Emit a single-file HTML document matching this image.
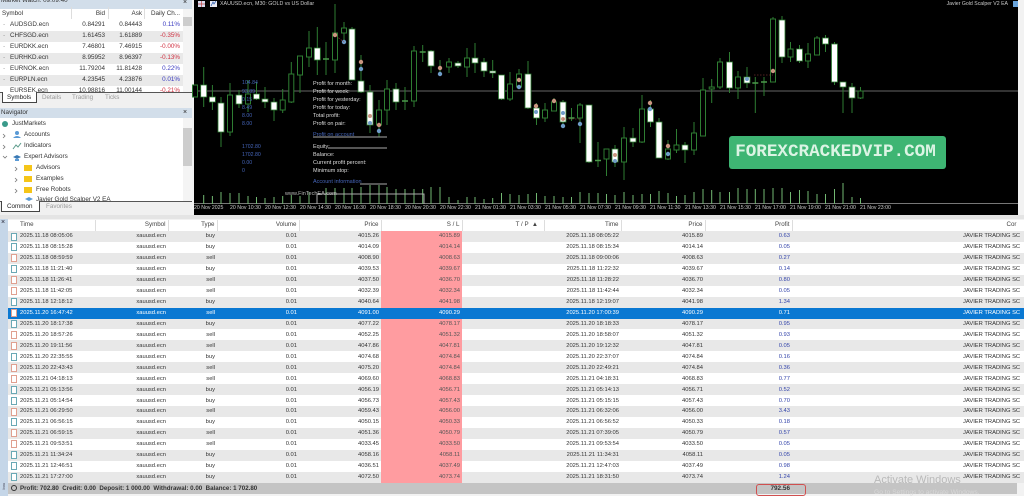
<!DOCTYPE html>
<html><head><meta charset="utf-8"><title>MT5</title>
<style>
*{box-sizing:border-box}
html,body{margin:0;padding:0;background:#f2f2f2}
body{width:1024px;height:496px;overflow:hidden;position:relative;font-family:"Liberation Sans",sans-serif}
#w{position:absolute;left:0;top:0;width:1024px;height:496px;overflow:hidden;filter:blur(.35px);background:#f2f2f2}
.a{position:absolute;white-space:nowrap}
.s{font-size:6.3px;color:#333;line-height:10px;height:10px}
.r{text-align:right}
.g{background:#e9e9e9}
.t{font-size:5.5px;color:#ddd;line-height:8px;left:313px}
.b{font-size:5.2px;color:#4565b8;line-height:8px;left:242px}
.x{font-size:5.2px;color:#ccc;line-height:8px;top:204px}
table{position:absolute;left:8px;top:219.5px;width:1016px;table-layout:fixed;border-collapse:collapse;font-size:5.8px;color:#333}
td,th{height:10.95px;padding:0 2px;line-height:10px;white-space:nowrap;overflow:hidden;text-align:right;font-weight:normal}
th{height:11.5px;background:#fff;border-right:1px solid #ddd;font-size:6.2px;color:#444}
tr:nth-child(even) td{background:#e8e8e8}
tr td:nth-child(6){background:#ff9ca0!important;color:#555}
tr td:nth-child(10){color:#3344aa}
tr td:nth-child(1),th:nth-child(1){text-align:left;padding-left:12px;position:relative}
tr td:nth-child(11){text-align:left;padding-left:171px}
th:nth-child(11){text-align:left;padding-left:214px}
tr.sel td,tr.sel td:nth-child(6),tr.sel td:nth-child(10){background:#0a78d2!important;color:#fff}
i{position:absolute;left:3px;top:1.5px;width:6px;height:8px;border:1px solid #6aa9b5;background:#fff}
i.e{border-color:#e0a090}
</style></head><body><div id="w">

<!-- sidebar -->
<div class="a" style="left:0;top:0;width:192px;height:215px;background:#f0f0f0"></div>
<div class="a" style="left:0;top:0;width:192px;height:9px;background:#d2deea"></div>
<div class="a" style="left:1px;top:-3px;font-size:6.3px;line-height:8px;color:#333">Market Watch: 09:09:40</div>
<div class="a" style="left:183px;top:-1px;font-size:7px;line-height:8px;color:#222">×</div>
<div class="a" style="left:0;top:9px;width:183px;height:83px;background:#fff"></div>
<div class="a g" style="left:0;top:30.5px;width:183px;height:11px"></div>
<div class="a g" style="left:0;top:52.5px;width:183px;height:11px"></div>
<div class="a g" style="left:0;top:74.5px;width:183px;height:11px"></div>
<div class="a" style="left:71px;top:7px;width:1px;height:12px;background:#ddd"></div>
<div class="a" style="left:108px;top:7px;width:1px;height:12px;background:#ddd"></div>
<div class="a" style="left:144px;top:7px;width:1px;height:12px;background:#ddd"></div>
<div class="a s" style="left:2px;top:9px">Symbol</div>
<div class="a s r" style="left:60px;top:9px;width:45px">Bid</div>
<div class="a s r" style="left:97px;top:9px;width:45px">Ask</div>
<div class="a s r" style="left:135px;top:9px;width:45px">Daily Ch...</div>

<div class="a s" style="left:3px;top:20px">·</div><div class="a s" style="left:10px;top:20px">AUDSGD.ecn</div><div class="a s r" style="left:60px;top:20px;width:45px">0.84291</div><div class="a s r" style="left:97px;top:20px;width:45px">0.84443</div><div class="a s r" style="left:135px;top:20px;width:45px;color:#3a3ac0">0.11%</div>
<div class="a s" style="left:3px;top:31px">·</div><div class="a s" style="left:10px;top:31px">CHFSGD.ecn</div><div class="a s r" style="left:60px;top:31px;width:45px">1.61453</div><div class="a s r" style="left:97px;top:31px;width:45px">1.61889</div><div class="a s r" style="left:135px;top:31px;width:45px;color:#d03040">-0.35%</div>
<div class="a s" style="left:3px;top:42px">·</div><div class="a s" style="left:10px;top:42px">EURDKK.ecn</div><div class="a s r" style="left:60px;top:42px;width:45px">7.46801</div><div class="a s r" style="left:97px;top:42px;width:45px">7.46915</div><div class="a s r" style="left:135px;top:42px;width:45px;color:#d03040">-0.00%</div>
<div class="a s" style="left:3px;top:53px">·</div><div class="a s" style="left:10px;top:53px">EURHKD.ecn</div><div class="a s r" style="left:60px;top:53px;width:45px">8.95952</div><div class="a s r" style="left:97px;top:53px;width:45px">8.96397</div><div class="a s r" style="left:135px;top:53px;width:45px;color:#d03040">-0.13%</div>
<div class="a s" style="left:3px;top:64px">·</div><div class="a s" style="left:10px;top:64px">EURNOK.ecn</div><div class="a s r" style="left:60px;top:64px;width:45px">11.79204</div><div class="a s r" style="left:97px;top:64px;width:45px">11.81428</div><div class="a s r" style="left:135px;top:64px;width:45px;color:#3a3ac0">0.22%</div>
<div class="a s" style="left:3px;top:75px">·</div><div class="a s" style="left:10px;top:75px">EURPLN.ecn</div><div class="a s r" style="left:60px;top:75px;width:45px">4.23545</div><div class="a s r" style="left:97px;top:75px;width:45px">4.23876</div><div class="a s r" style="left:135px;top:75px;width:45px;color:#3a3ac0">0.01%</div>
<div class="a s" style="left:10px;top:86px">EURSEK.ecn</div><div class="a s r" style="left:60px;top:86px;width:45px">10.98816</div><div class="a s r" style="left:97px;top:86px;width:45px">11.00144</div><div class="a s r" style="left:135px;top:86px;width:45px;color:#d03040">-0.21%</div>

<div class="a" style="left:183px;top:9px;width:9px;height:83px;background:#f4f4f4"></div>
<div class="a" style="left:183px;top:17px;width:9px;height:9px;background:#cdcdcd"></div>
<div class="a" style="left:0;top:92px;width:192px;height:16px;background:#f0f0f0;border-top:1px solid #555"></div>
<div class="a" style="left:2px;top:92px;width:35px;height:11px;background:#fff;border:1px solid #444;border-top:0"></div>
<div class="a s" style="left:7px;top:93px;color:#222">Symbols</div>
<div class="a s" style="left:42px;top:93px;color:#999">Details</div>
<div class="a s" style="left:72px;top:93px;color:#999">Trading</div>
<div class="a s" style="left:105px;top:93px;color:#999">Ticks</div>

<div class="a" style="left:0;top:108px;width:192px;height:10px;background:#d2deea"></div>
<div class="a s" style="left:1px;top:108px">Navigator</div>
<div class="a" style="left:183px;top:108px;font-size:7px;line-height:10px;color:#222">×</div>
<div class="a" style="left:0;top:118px;width:192px;height:83px;background:#fff"></div>
<div class="a" style="left:183px;top:118px;width:9px;height:83px;background:#f4f4f4"></div>
<div class="a" style="left:183px;top:128px;width:9px;height:38px;background:#cdcdcd"></div>
<svg class="a" style="left:0;top:118px" width="40" height="85" viewBox="0 0 40 85">
<circle cx="5" cy="6" r="3" fill="#3a9a8a"/>
<path d="M3 16l2 2-2 2M3 27l2 2-2 2M3 38l2 2 2-2M15 49l2 2-2 2M15 60l2 2-2 2M15 71l2 2-2 2" fill="none" stroke="#777" stroke-width=".8"/>
<circle cx="17" cy="15" r="2" fill="#5a9ad5"/><path d="M13 20q4-4 8 0z" fill="#5a9ad5"/>
<path d="M13 31l3-4 2 2 3-4" fill="none" stroke="#5a9a8a"/>
<path d="M13 39l4-2 4 2-4 2z" fill="#3a7ab5"/><path d="M15 41v2h4v-2" fill="#5a9ad5"/>
<rect x="24" y="47" width="8" height="6" fill="#f5c518"/><rect x="24" y="58" width="8" height="6" fill="#f5c518"/><rect x="24" y="69" width="8" height="6" fill="#f5c518"/>
<path d="M25 81l4-2 4 2-4 2z" fill="#5a9ad5"/>
</svg>
<div class="a s" style="left:12px;top:119px">JustMarkets</div>
<div class="a s" style="left:24px;top:130px">Accounts</div>
<div class="a s" style="left:24px;top:141px">Indicators</div>
<div class="a s" style="left:24px;top:152px">Expert Advisors</div>
<div class="a s" style="left:36px;top:163px">Advisors</div>
<div class="a s" style="left:36px;top:174px">Examples</div>
<div class="a s" style="left:36px;top:185px">Free Robots</div>
<div class="a s" style="left:36px;top:195px">Javier Gold Scalper V2 EA</div>
<div class="a" style="left:0;top:201px;width:192px;height:14px;background:#f0f0f0;border-top:1px solid #555"></div>
<div class="a" style="left:1px;top:201px;width:39px;height:11px;background:#fff;border:1px solid #444;border-top:0"></div>
<div class="a s" style="left:7px;top:202px;color:#222">Common</div>
<div class="a s" style="left:46px;top:202px;color:#999">Favorites</div>

<!-- chart -->
<div class="a" style="left:194px;top:0;width:824px;height:215px;background:#000"></div>
<svg class="a" style="left:0;top:0" width="1024" height="216" viewBox="0 0 1024 216">
<path d="M194 91H1018" stroke="#666" stroke-width="1"/>
<path d="M194 203.5H1018" stroke="#777" stroke-width="1"/>
<path stroke="#2e7d32" stroke-width="1" fill="none" d="M203.7 67V107M212.4 85V110M221 97V147M230 83V136M239 90V108M248 80V112M256.5 82V100M265 87V108M274 98V121M282.7 89V113M291.3 62V103M300 56V93M309 31V67M317.3 27V75M326 42V75M335 4V73M344 22V43M352 27V80M361 55V93M370 85V133M379 100V137M387 80V125M396 83V110M405 87V110M414 46V107M422.7 45V62M431 50V73M440 60V75M449 58V73M458 61V68M467 48V77M475 43V73M484 58V77M492.7 60V78M501.5 75V100M510 72V101M519 69V88M528 61V109M536.5 103V125M545 103V122M554 98V111M563 100V125M571.5 108V121M580 103V143M589 105V163M598 142V167M606.5 149V176M615 145V167M624 127V180M633 128V147M642 95V143M650.5 100V127M659 118V158M668 140V160M676.5 129V153M685 142V163M694 122V155M703 78V136M711.7 79V103M720 58V89M729.5 52V93M738 71V99M747 67V88M755.3 77V113M764 77V96M773 17V82M782 16V63M790.5 42V62M799.5 45V63M808 43V68M817 36V55M825.5 35V52M834.5 42V85M843 82V113M852 83V113M860.5 87V99"/>
<path stroke="#2e7d32" stroke-width="1" fill="#000" d="M192.5 85h5v12h-5zM227.5 95h5v37h-5zM245.5 94h5v10h-5zM280.2 100h5v10h-5zM288.8 74h5v28h-5zM297.5 56h5v19h-5zM306.5 48h5v9h-5zM332.5 33h5v27h-5zM341.5 28h5v5h-5zM376.5 110h5v15h-5zM384.5 89h5v21h-5zM411.5 51h5v50h-5zM446.5 62h5v5h-5zM464.5 58h5v9h-5zM507.5 84h5v15h-5zM516.5 74h5v13h-5zM542.5 110h5v8h-5zM551.5 102h5v9h-5zM577.5 105h5v13h-5zM604 149h5v10h-5zM621.5 138h5v24h-5zM639.5 109h5v33h-5zM665.5 149h5v10h-5zM674 145h5v5h-5zM691.5 133h5v17h-5zM700.5 90h5v46h-5zM709.2 87h5v2h-5zM717.5 62h5v25h-5zM735.5 77h5v11h-5zM770.5 19h5v63h-5zM788 49h5v8h-5zM805.5 54h5v7h-5zM814.5 38h5v17h-5zM858 91h5v7h-5z"/>
<path stroke="#2e7d32" stroke-width=".8" fill="#fff" d="M200.7 85h6v12h-6zM209.4 97h6v5h-6zM218 103h6v29h-6zM236 95h6v9h-6zM253.5 94h6v5h-6zM262 99h6v3h-6zM271 102h6v8h-6zM314.3 48h6v12h-6zM349 29h6v51h-6zM358 81h6v11h-6zM367 92h6v33h-6zM393 89h6v13h-6zM428 51h6v15h-6zM455 63h6v3h-6zM472 58h6v5h-6zM481 62h6v9h-6zM489.7 71h6v2h-6zM498.5 75h6v24h-6zM525 74h6v34h-6zM533.5 108h6v10h-6zM560 102h6v20h-6zM586 105h6v57h-6zM612 149h6v13h-6zM630 138h6v4h-6zM647.5 109h6v13h-6zM656 122h6v36h-6zM682 145h6v5h-6zM726.5 62h6v26h-6zM744 77h6v6h-6zM779 20h6v37h-6zM796.5 49h6v12h-6zM822.5 38h6v6h-6zM831.5 44h6v38h-6zM840 82h6v5h-6zM849 87h6v11h-6z"/>
<path stroke="#4a9a4a" stroke-width="1.4" d="M323 59h6M402 101h6M419.7 52h6M568.5 118h6M595 160.5h6M761 82h6M752.3 83h6"/>
<path stroke="#72b872" stroke-width="1" d="M203.7 195V204M212.4 196V204M221 192V204M230 193V204M239 193V204M248 196V204M256.5 197V204M265 198V204M274 197V204M282.7 196V204M291.3 195V204M300 196V204M309 192V204M326 188V204M335 188V204M344 188V204M352 188V204M361 187V204M370 185V204M379 185V204M387 187V204M396 189V204M405 189V204M414 189V204M422.7 189V204M431 187V204M440 187V204M449 197V204M458 200V204M467 197V204M475 197V204M484 199V204M492.7 198V204M501.5 193V204M510 194V204M519 195V204M528 194V204M536.5 193V204M545 196V204M554 196V204M563 197V204M571.5 197V204M580 192V204M589 193V204M598 193V204M606.5 194V204M615 195V204M624 192V204M633 195V204M642 194V204M650.5 194V204M659 191V204M668 193V204M676.5 196V204M685 195V204M694 192V204M703 189V204M711.7 190V204M720 192V204M729.5 192V204M738 188V204M747 189V204M755.3 189V204M764 189V204M773 188V204M782 188V204M790.5 192V204M799.5 190V204M808 191V204M817 194V204M825.5 194V204M834.5 189V204M843 183V204M852 197V204M860.5 198V204"/>
<g fill="#c99580"><circle cx="335" cy="35" r="2.2"/><circle cx="361" cy="62" r="2.2"/><circle cx="440" cy="68" r="2.2"/><circle cx="370" cy="116" r="2"/><circle cx="379" cy="125" r="2.2"/><circle cx="519" cy="80" r="2.2"/><circle cx="536" cy="106" r="2.2"/><circle cx="554" cy="101" r="2.2"/><circle cx="650" cy="103" r="2.2"/><circle cx="563" cy="119" r="2"/><circle cx="615" cy="155" r="2"/><circle cx="668" cy="146" r="2.2"/><circle cx="773" cy="71" r="2.2"/></g>
<g fill="#6f9cc8"><circle cx="344" cy="42" r="2.2"/><circle cx="361" cy="69" r="2.2"/><circle cx="440" cy="74" r="2.2"/><circle cx="370" cy="123" r="2"/><circle cx="379" cy="131" r="2.2"/><circle cx="519" cy="87" r="2.2"/><circle cx="650" cy="109" r="2.2"/><circle cx="536" cy="112" r="2"/><circle cx="563" cy="113" r="2"/><circle cx="563" cy="126" r="2.2"/><circle cx="580" cy="124" r="2.2"/><circle cx="615" cy="161" r="2"/><circle cx="668" cy="154" r="2.2"/><circle cx="747" cy="79" r="2"/></g>
<path d="M336 36l8 6M563 119h17M754 75h19" stroke="#a04040" stroke-width=".6" stroke-dasharray="1.5 1.5" fill="none"/>
<path d="M313 137H387M328 148H387M360 184H387M317 194H424V204M317 194V204" stroke="#aaa" stroke-width="1" fill="none"/>
<rect x="198" y="1" width="7" height="6" fill="#d8dcf0"/><path d="M198 4h7M201.5 1v6" stroke="#c04040" stroke-width=".7"/>
<rect x="210" y="1" width="7" height="6" fill="#e8eaf4"/><path d="M211 6l2-4 1 2 2-3" stroke="#3060b0" fill="none" stroke-width=".8"/>
<rect x="1013" y="1" width="5" height="6" fill="#6aa5dc"/>
</svg>

<div class="a" style="left:220px;top:0;font-size:5.3px;line-height:8px;color:#ccc">XAUUSD.ecn, M30: GOLD vs US Dollar</div>
<div class="a r" style="left:900px;top:0;width:108px;font-size:5.2px;line-height:8px;color:#ccc">Javier Gold Scalper V2 EA</div>

<div class="a b" style="top:79px">104.84</div><div class="a b" style="top:88px">93.89</div><div class="a b" style="top:96px">0.15</div><div class="a b" style="top:104px">8.49</div><div class="a b" style="top:112px">8.00</div><div class="a b" style="top:120px">8.00</div>
<div class="a b" style="top:143px">1702.80</div><div class="a b" style="top:151px">1702.80</div><div class="a b" style="top:159px">0.00</div><div class="a b" style="top:167px">0</div>
<div class="a t" style="top:80px">Profit for month:</div><div class="a t" style="top:88px">Profit for week:</div><div class="a t" style="top:96px">Profit for yesterday:</div><div class="a t" style="top:104px">Profit for today:</div><div class="a t" style="top:112px">Total profit:</div><div class="a t" style="top:120px">Profit on pair:</div>
<div class="a t" style="top:131px;color:#4565b8">Profit on account</div>
<div class="a t" style="top:143px">Equity:</div><div class="a t" style="top:151px">Balance:</div><div class="a t" style="top:159px">Current profit percent:</div><div class="a t" style="top:167px">Minimum stop:</div>
<div class="a t" style="top:178px;color:#4565b8">Account information</div>
<div class="a t" style="left:285px;top:190px;color:#bbb;font-size:5.5px">www.FinTechEA.com</div>

<div class="a x" style="left:194px">20 Nov 2025</div><div class="a x" style="left:230px">20 Nov 10:30</div><div class="a x" style="left:265px">20 Nov 12:30</div><div class="a x" style="left:300px">20 Nov 14:30</div><div class="a x" style="left:335px">20 Nov 16:30</div><div class="a x" style="left:370px">20 Nov 18:30</div><div class="a x" style="left:405px">20 Nov 20:30</div><div class="a x" style="left:440px">20 Nov 22:30</div><div class="a x" style="left:475px">21 Nov 01:30</div><div class="a x" style="left:510px">21 Nov 03:30</div><div class="a x" style="left:545px">21 Nov 05:30</div><div class="a x" style="left:580px">21 Nov 07:30</div><div class="a x" style="left:615px">21 Nov 09:30</div><div class="a x" style="left:650px">21 Nov 11:30</div><div class="a x" style="left:685px">21 Nov 13:30</div><div class="a x" style="left:720px">21 Nov 15:30</div><div class="a x" style="left:755px">21 Nov 17:00</div><div class="a x" style="left:790px">21 Nov 19:00</div><div class="a x" style="left:825px">21 Nov 21:00</div><div class="a x" style="left:860px">21 Nov 23:00</div>

<div class="a" style="left:729px;top:136px;width:217px;height:33px;border-radius:3px;background:#3eb573"></div>
<div class="a" style="left:727px;top:136px;width:217px;height:33px;line-height:33px;text-align:center;font-family:'Liberation Mono',monospace;font-weight:bold;font-size:17.6px;color:#dcf4e4">FOREXCRACKEDVIP.COM</div>

<!-- toolbox -->
<div class="a" style="left:0;top:215px;width:1024px;height:4px;background:#e4e4e4"></div>
<div class="a" style="left:0;top:219px;width:8px;height:277px;background:#c5d6e8"></div>
<div class="a" style="left:1px;top:218px;font-size:7px;line-height:9px;color:#223">×</div>
<div class="a" style="left:8px;top:230px;width:1016px;height:253px;background:#fff"></div>

<table>
<colgroup><col style="width:87px"><col style="width:73px"><col style="width:49px"><col style="width:82px"><col style="width:82px"><col style="width:81px"><col style="width:82px"><col style="width:77px"><col style="width:84px"><col style="width:87px"><col style="width:232px"></colgroup>
<tr><th>Time</th><th>Symbol</th><th>Type</th><th>Volume</th><th>Price</th><th>S / L</th><th>T / P &nbsp;▲&nbsp;&nbsp;</th><th>Time</th><th>Price</th><th>Profit</th><th>Cor</th></tr>
<tr><td><i></i>2025.11.18 08:05:06</td><td>xauusd.ecn</td><td>buy</td><td>0.01</td><td>4015.26</td><td>4015.89</td><td></td><td>2025.11.18 08:05:22</td><td>4015.89</td><td>0.63</td><td>JAVIER TRADING SC</td></tr>
<tr><td><i></i>2025.11.18 08:15:28</td><td>xauusd.ecn</td><td>buy</td><td>0.01</td><td>4014.09</td><td>4014.14</td><td></td><td>2025.11.18 08:15:34</td><td>4014.14</td><td>0.05</td><td>JAVIER TRADING SC</td></tr>
<tr><td><i class="e"></i>2025.11.18 08:59:59</td><td>xauusd.ecn</td><td>sell</td><td>0.01</td><td>4008.90</td><td>4008.63</td><td></td><td>2025.11.18 09:00:06</td><td>4008.63</td><td>0.27</td><td>JAVIER TRADING SC</td></tr>
<tr><td><i></i>2025.11.18 11:21:40</td><td>xauusd.ecn</td><td>buy</td><td>0.01</td><td>4039.53</td><td>4039.67</td><td></td><td>2025.11.18 11:22:32</td><td>4039.67</td><td>0.14</td><td>JAVIER TRADING SC</td></tr>
<tr><td><i class="e"></i>2025.11.18 11:26:41</td><td>xauusd.ecn</td><td>sell</td><td>0.01</td><td>4037.50</td><td>4036.70</td><td></td><td>2025.11.18 11:28:22</td><td>4036.70</td><td>0.80</td><td>JAVIER TRADING SC</td></tr>
<tr><td><i class="e"></i>2025.11.18 11:42:05</td><td>xauusd.ecn</td><td>sell</td><td>0.01</td><td>4032.39</td><td>4032.34</td><td></td><td>2025.11.18 11:42:44</td><td>4032.34</td><td>0.05</td><td>JAVIER TRADING SC</td></tr>
<tr><td><i></i>2025.11.18 12:18:12</td><td>xauusd.ecn</td><td>buy</td><td>0.01</td><td>4040.64</td><td>4041.98</td><td></td><td>2025.11.18 12:19:07</td><td>4041.98</td><td>1.34</td><td>JAVIER TRADING SC</td></tr>
<tr class="sel"><td><i class="e"></i>2025.11.20 16:47:42</td><td>xauusd.ecn</td><td>sell</td><td>0.01</td><td>4091.00</td><td>4090.29</td><td></td><td>2025.11.20 17:00:39</td><td>4090.29</td><td>0.71</td><td>JAVIER TRADING SC</td></tr>
<tr><td><i></i>2025.11.20 18:17:38</td><td>xauusd.ecn</td><td>buy</td><td>0.01</td><td>4077.22</td><td>4078.17</td><td></td><td>2025.11.20 18:18:33</td><td>4078.17</td><td>0.95</td><td>JAVIER TRADING SC</td></tr>
<tr><td><i class="e"></i>2025.11.20 18:57:26</td><td>xauusd.ecn</td><td>sell</td><td>0.01</td><td>4052.25</td><td>4051.32</td><td></td><td>2025.11.20 18:58:07</td><td>4051.32</td><td>0.93</td><td>JAVIER TRADING SC</td></tr>
<tr><td><i class="e"></i>2025.11.20 19:11:56</td><td>xauusd.ecn</td><td>sell</td><td>0.01</td><td>4047.86</td><td>4047.81</td><td></td><td>2025.11.20 19:12:32</td><td>4047.81</td><td>0.05</td><td>JAVIER TRADING SC</td></tr>
<tr><td><i></i>2025.11.20 22:35:55</td><td>xauusd.ecn</td><td>buy</td><td>0.01</td><td>4074.68</td><td>4074.84</td><td></td><td>2025.11.20 22:37:07</td><td>4074.84</td><td>0.16</td><td>JAVIER TRADING SC</td></tr>
<tr><td><i class="e"></i>2025.11.20 22:43:43</td><td>xauusd.ecn</td><td>sell</td><td>0.01</td><td>4075.20</td><td>4074.84</td><td></td><td>2025.11.20 22:49:21</td><td>4074.84</td><td>0.36</td><td>JAVIER TRADING SC</td></tr>
<tr><td><i class="e"></i>2025.11.21 04:18:13</td><td>xauusd.ecn</td><td>sell</td><td>0.01</td><td>4069.60</td><td>4068.83</td><td></td><td>2025.11.21 04:18:31</td><td>4068.83</td><td>0.77</td><td>JAVIER TRADING SC</td></tr>
<tr><td><i></i>2025.11.21 05:13:56</td><td>xauusd.ecn</td><td>buy</td><td>0.01</td><td>4056.19</td><td>4056.71</td><td></td><td>2025.11.21 05:14:13</td><td>4056.71</td><td>0.52</td><td>JAVIER TRADING SC</td></tr>
<tr><td><i></i>2025.11.21 05:14:54</td><td>xauusd.ecn</td><td>buy</td><td>0.01</td><td>4056.73</td><td>4057.43</td><td></td><td>2025.11.21 05:15:15</td><td>4057.43</td><td>0.70</td><td>JAVIER TRADING SC</td></tr>
<tr><td><i class="e"></i>2025.11.21 06:29:50</td><td>xauusd.ecn</td><td>sell</td><td>0.01</td><td>4059.43</td><td>4056.00</td><td></td><td>2025.11.21 06:32:06</td><td>4056.00</td><td>3.43</td><td>JAVIER TRADING SC</td></tr>
<tr><td><i></i>2025.11.21 06:56:15</td><td>xauusd.ecn</td><td>buy</td><td>0.01</td><td>4050.15</td><td>4050.33</td><td></td><td>2025.11.21 06:56:52</td><td>4050.33</td><td>0.18</td><td>JAVIER TRADING SC</td></tr>
<tr><td><i class="e"></i>2025.11.21 06:59:15</td><td>xauusd.ecn</td><td>sell</td><td>0.01</td><td>4051.36</td><td>4050.79</td><td></td><td>2025.11.21 07:39:05</td><td>4050.79</td><td>0.57</td><td>JAVIER TRADING SC</td></tr>
<tr><td><i class="e"></i>2025.11.21 09:53:51</td><td>xauusd.ecn</td><td>sell</td><td>0.01</td><td>4033.45</td><td>4033.50</td><td></td><td>2025.11.21 09:53:54</td><td>4033.50</td><td>0.05</td><td>JAVIER TRADING SC</td></tr>
<tr><td><i></i>2025.11.21 11:34:24</td><td>xauusd.ecn</td><td>buy</td><td>0.01</td><td>4058.16</td><td>4058.11</td><td></td><td>2025.11.21 11:34:31</td><td>4058.11</td><td>0.05</td><td>JAVIER TRADING SC</td></tr>
<tr><td><i></i>2025.11.21 12:46:51</td><td>xauusd.ecn</td><td>buy</td><td>0.01</td><td>4036.51</td><td>4037.49</td><td></td><td>2025.11.21 12:47:03</td><td>4037.49</td><td>0.98</td><td>JAVIER TRADING SC</td></tr>
<tr><td><i></i>2025.11.21 17:27:00</td><td>xauusd.ecn</td><td>buy</td><td>0.01</td><td>4072.50</td><td>4073.74</td><td></td><td>2025.11.21 18:31:50</td><td>4073.74</td><td>1.24</td><td>JAVIER TRADING SC</td></tr>
</table>

<!-- footer -->
<div class="a" style="left:8px;top:483px;width:1009px;height:11px;background:#c4c4c4"></div>
<div class="a" style="left:11px;top:484px;width:6px;height:6px;border:1px solid #333;border-radius:50%;margin-top:1px"></div>
<div class="a" style="left:20px;top:484px;font-size:6.2px;line-height:10px;font-weight:bold;color:#333">Profit: 702.80 &nbsp;Credit: 0.00 &nbsp;Deposit: 1 000.00 &nbsp;Withdrawal: 0.00 &nbsp;Balance: 1 702.80</div>
<div class="a" style="left:756px;top:484px;width:50px;height:12px;border:1px solid #d05050;border-radius:3px"></div>
<div class="a r" style="left:750px;top:484px;width:40px;font-size:6.4px;line-height:10px;font-weight:bold;color:#333">792.56</div>
<div class="a" style="left:874px;top:474px;font-size:11px;line-height:13px;color:rgba(170,170,170,.75)">Activate Windows</div>
<div class="a" style="left:874px;top:488px;font-size:6.7px;line-height:9px;color:#d8d8d8">Go to Settings to activate Windows.</div>
<div class="a" style="left:1px;top:483px;font-size:4px;color:#445;line-height:5px;writing-mode:vertical-rl;transform:rotate(180deg)">box</div>

</div></body></html>
